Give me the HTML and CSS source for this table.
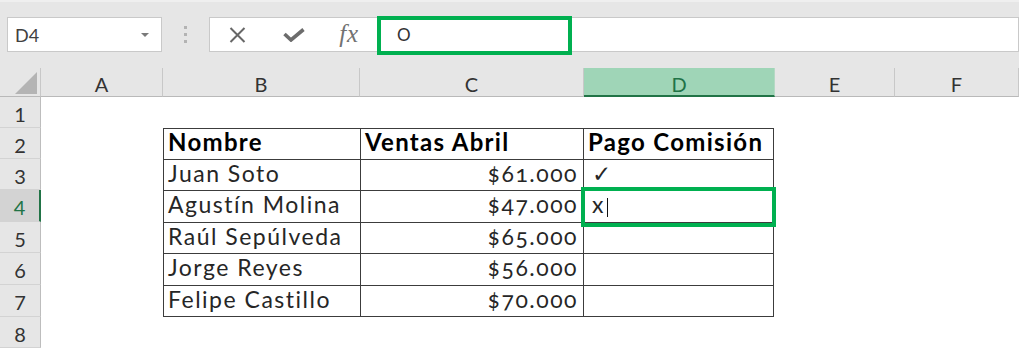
FILE: index.html
```html
<!DOCTYPE html>
<html lang="es">
<head>
<meta charset="utf-8">
<title>Excel - Pago Comisión</title>
<link rel="stylesheet" href="styles.css">
</head>
<body>
<div class="app">
  <div class="toolbar">
    <div class="namebox"><span class="ref">D4</span><span class="caret"></span></div>
    <div class="grip"><i></i><i></i><i></i></div>
    <div class="formula">
      <div class="fbtns">
        <span class="fbtn">
          <svg width="17" height="16" viewBox="0 0 17 16"><path d="M1.5 1 L15.5 15 M15.5 1 L1.5 15" stroke="#676767" stroke-width="2" fill="none"/></svg>
        </span>
        <span class="fbtn">
          <svg width="22" height="14" viewBox="0 0 22 14"><path d="M1.5 6 L8 12 L20.5 1.5" stroke="#6c6c6c" stroke-width="3.6" fill="none" stroke-linejoin="miter"/></svg>
        </span>
        <span class="fbtn fx">fx</span>
      </div>
      <div class="finput">O</div>
      <div class="annot"></div>
    </div>
  </div>
  <div class="sheet">
    <div class="corner"><svg width="41" height="29" viewBox="0 0 41 29"><polygon points="37,4 37,26 15,26" fill="#b4b4b4"/></svg></div>
    <div class="colh">A</div>
    <div class="colh">B</div>
    <div class="colh">C</div>
    <div class="colh sel">D</div>
    <div class="colh">E</div>
    <div class="colh">F</div>
    <div class="rowh">1</div>
    <div class="rowh">2</div>
    <div class="rowh">3</div>
    <div class="rowh sel">4</div>
    <div class="rowh">5</div>
    <div class="rowh">6</div>
    <div class="rowh">7</div>
    <div class="rowh">8</div>
    <table class="data">
      <colgroup><col class="cb"><col class="cc"><col class="cd"></colgroup>
      <tr class="h1"><th>Nombre</th><th>Ventas Abril</th><th>Pago Comisión</th></tr>
      <tr class="h1"><td>Juan Soto</td><td class="num">$61.000</td><td class="mark">✓</td></tr>
      <tr class="h2"><td>Agustín Molina</td><td class="num">$47.000</td><td class="mark active">x<span class="cursor"></span></td></tr>
      <tr class="h1"><td>Raúl Sepúlveda</td><td class="num">$65.000</td><td></td></tr>
      <tr class="h2"><td>Jorge Reyes</td><td class="num">$56.000</td><td></td></tr>
      <tr class="h1"><td>Felipe Castillo</td><td class="num">$70.000</td><td></td></tr>
    </table>
  </div>
</div>
</body>
</html>
```

FILE: styles.css
```css
* { box-sizing: border-box; }
html, body { margin: 0; padding: 0; background: #fff; }
body { font-family: Lato, "Liberation Sans", sans-serif; overflow: hidden; }

.app { width: 1019px; height: 348px; overflow: hidden; }

/* ---------- toolbar / formula bar ---------- */
.toolbar {
  height: 68px;
  background: #e6e6e6;
  border-top: 2px solid #efefef;
  display: flex;
  align-items: flex-start;
  padding: 15px 0 0 7px;
}
.namebox {
  width: 155px;
  height: 35px;
  background: #fff;
  border: 1px solid #c9c9c9;
  display: flex;
  align-items: center;
  justify-content: space-between;
  padding: 0 12px 0 7px;
  font-size: 18px;
  color: #404040;
}
.caret {
  width: 0; height: 0;
  border-left: 4px solid transparent;
  border-right: 4px solid transparent;
  border-top: 4px solid #7a7a7a;
}
.grip {
  width: 47px;
  height: 35px;
  display: flex;
  flex-direction: column;
  align-items: center;
  justify-content: center;
  gap: 4px;
}
.grip i { width: 3px; height: 3px; background: #b3b3b3; display: block; }

.formula {
  position: relative;
  width: 810px;
  height: 35px;
  background: #fff;
  border: 1px solid #c9c9c9;
  display: flex;
  align-items: center;
}
.fbtns { width: 167px; height: 100%; display: flex; }
.fbtn { width: 56px; display: flex; align-items: center; justify-content: center; }
.fx {
  font-family: "Liberation Serif", serif;
  font-style: italic;
  font-size: 25px;
  color: #727272;
  letter-spacing: 1px;
  padding-bottom: 2px;
}
.finput { padding-left: 20px; font-size: 17px; color: #333; }
.annot {
  position: absolute;
  left: 167px;
  top: -2px;
  width: 195px;
  height: 39px;
  border: 4px solid #00b050;
}

/* ---------- sheet grid ---------- */
.sheet {
  display: grid;
  grid-template-columns: 41px 122px 197px 224px 191px 120px 124px;
  grid-template-rows: 29px 31px 31px 31px 32px 31px 32px 32px 31px;
}
.corner {
  background: #e6e6e6;
  border-right: 1px solid #c8c8c8;
  border-bottom: 1px solid #b9b9b9;
}
.corner svg { display: block; }
.colh {
  background: #e6e6e6;
  border-right: 1px solid #c8c8c8;
  border-bottom: 1px solid #b9b9b9;
  display: flex;
  align-items: center;
  justify-content: center;
  padding-top: 4px;
  font-size: 20px;
  color: #333;
}
.colh.sel {
  background: #9fd5b7;
  color: #217346;
  border-bottom: 2px solid #217346;
  border-right-color: #b5d9c4;
}
.rowh {
  grid-column: 1;
  background: #e6e6e6;
  border-right: 1px solid #bdbdbd;
  border-bottom: 1px solid #d3d3d3;
  display: flex;
  align-items: center;
  justify-content: center;
  padding-top: 3px;
  font-size: 20px;
  color: #333;
}
.rowh.sel {
  background: #d3d3d3;
  color: #217346;
  border-right: 2px solid #217346;
}

/* ---------- data table ---------- */
.data {
  grid-column: 3 / 6;
  grid-row: 3 / 9;
  align-self: start;
  border-collapse: separate;
  border-spacing: 0;
  table-layout: fixed;
  width: 611px;
  border-top: 1px solid #3c3c3c;
  border-left: 1px solid #3c3c3c;
  font-size: 23px;
  line-height: 26px;
  color: #262626;
  font-variant-numeric: oldstyle-nums;
  letter-spacing: 1.5px;
}
.cb { width: 197px; }
.cc { width: 223px; }
.cd { width: 190px; }
.data th, .data td {
  border-right: 1px solid #3c3c3c;
  border-bottom: 1px solid #3c3c3c;
  padding: 0 4px;
  vertical-align: top;
  text-align: left;
  white-space: nowrap;
  overflow: visible;
}
.data th { font-weight: 700; color: #000; font-size: 24px; letter-spacing: 1.3px; }
.data tr.h1 > * { height: 31px; }
.data tr.h2 > * { height: 32px; }
.data td.num { text-align: right; padding-right: 5px; }
.data td.mark { padding-left: 8px; }
.data td.active { position: relative; }
.data td.active::after {
  content: "";
  position: absolute;
  left: -3px;
  top: -4px;
  right: -3px;
  bottom: -5px;
  border: 4px solid #00b050;
}
.cursor {
  display: inline-block;
  width: 1px;
  height: 19px;
  background: #111;
  margin-left: 2px;
  vertical-align: -4px;
}
```
